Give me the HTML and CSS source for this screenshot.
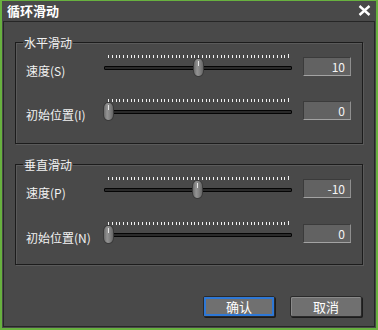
FILE: index.html
```html
<!DOCTYPE html>
<html lang="zh">
<head>
<meta charset="utf-8">
<title>循环滑动</title>
<link rel="stylesheet" href="styles.css">
</head>
<body>
<svg class="defs" width="0" height="0" aria-hidden="true">
  <symbol id="ticks" viewBox="0 0 181 4">
    <path d="M0.5 1v3m4-3v3m4-3v3m3-3v3m4-3v3m4-3v3m4-3v3m3-3v3m4-3v3m4-3v3m4-3v3m3-3v3m4-3v3m4-3v3m4-3v3m3-3v3m4-3v3m4-3v3m4-3v3m3-3v3m4-3v3m4-3v3m4-3v3m3-3v3m4-3v3m4-3v3m4-3v3m3-3v3m4-3v3m4-3v3m4-3v3m3-3v3m4-3v3m4-3v3m4-3v3m3-3v3m4-3v3m4-3v3m4-3v3m3-3v3m4-3v3m4-3v3m4-3v3m3-3v3m4-3v3m4-3v3m4-3v3m3-3v3m4-3v3M180.5 0v1" stroke="#f0f0f0" stroke-width="1" fill="none" shape-rendering="crispEdges"/>
  </symbol>
</svg>
<div class="window">
  <div class="titlebar">
    <span class="title">循环滑动</span>
    <svg class="close" width="13" height="11" viewBox="0 0 13 11"><path d="M1.5 1L11.5 10M11.5 1L1.5 10" stroke="#fff" stroke-width="2.4" fill="none"/></svg>
  </div>
  <div class="frame">
    <fieldset class="group">
      <legend>水平滑动</legend>
      <div class="row">
        <span class="label">速度(S)</span>
        <div class="slider">
          <svg class="ticks" width="181" height="4"><use href="#ticks"/></svg>
          <div class="track"></div>
          <div class="thumb" style="left:90px"></div>
        </div>
        <div class="field">10</div>
      </div>
      <div class="row">
        <span class="label">初始位置(I)</span>
        <div class="slider">
          <svg class="ticks" width="181" height="4"><use href="#ticks"/></svg>
          <div class="track"></div>
          <div class="thumb" style="left:0px"></div>
        </div>
        <div class="field">0</div>
      </div>
    </fieldset>
    <fieldset class="group group-second">
      <legend>垂直滑动</legend>
      <div class="row">
        <span class="label">速度(P)</span>
        <div class="slider">
          <svg class="ticks" width="181" height="4"><use href="#ticks"/></svg>
          <div class="track"></div>
          <div class="thumb" style="left:89px"></div>
        </div>
        <div class="field">-10</div>
      </div>
      <div class="row">
        <span class="label">初始位置(N)</span>
        <div class="slider">
          <svg class="ticks" width="181" height="4"><use href="#ticks"/></svg>
          <div class="track"></div>
          <div class="thumb" style="left:0px"></div>
        </div>
        <div class="field">0</div>
      </div>
    </fieldset>
    <div class="buttons">
      <button class="btn btn-default">确认</button>
      <button class="btn">取消</button>
    </div>
  </div>
</div>
</body>
</html>
```
FILE: styles.css
```css
html, body {
  margin: 0;
  padding: 0;
  background: #494949;
}
body {
  font-family: "Noto Sans CJK SC", "Noto Sans", "Liberation Sans", sans-serif;
  color: #f2f2f2;
  font-size: 12px;
}
.defs {
  position: absolute;
  width: 0;
  height: 0;
  overflow: hidden;
}
.window {
  width: 378px;
  height: 330px;
  box-sizing: border-box;
  border-style: solid;
  border-color: #68b13f;
  border-width: 1px 2px 2px 2px;
  background: #494949;
  padding: 0 1px 1px 1px;
}
.titlebar {
  height: 20px;
  display: flex;
  align-items: center;
  justify-content: space-between;
  padding: 0 4px 0 4px;
}
.title {
  font-weight: bold;
  font-size: 13px;
  line-height: 20px;
  color: #fff;
}
.close {
  display: block;
  margin-top: -1px;
}
.frame {
  height: 306px;
  box-sizing: border-box;
  border: 1px solid #262626;
}
.group {
  margin: 14px 11px 0 11px;
  padding: 5px 0 22px 10px;
  border: 1px solid #1c1c1c;
  box-shadow: 1px 1px 0 #5a5a5a, inset 1px 1px 0 #5a5a5a;
  min-width: 0;
}
.group legend {
  padding: 0 1px;
  margin-left: -3px;
  font-size: 12px;
  line-height: 13px;
  color: #f2f2f2;
}
.group-second {
  padding-bottom: 20px;
}
.group-second .row + .row {
  margin-top: 22px;
}
.row {
  display: grid;
  grid-template-columns: 66px 189px 48px;
  column-gap: 11px;
  align-items: start;
  height: 23px;
}
.row + .row {
  margin-top: 21px;
}
.label {
  padding-top: 10px;
  line-height: 14px;
  white-space: nowrap;
}
.slider {
  position: relative;
  height: 23px;
}
.ticks {
  display: block;
  margin-left: 5px;
}
.track {
  margin: 8px 0 0 1px;
  width: 188px;
  height: 4px;
  box-sizing: border-box;
  border: 1px solid #050505;
  background: #2a2a2a;
  border-radius: 1px;
}
.thumb {
  position: absolute;
  top: 4px;
  width: 11px;
  height: 19px;
  box-sizing: border-box;
  border: 1px solid #3a3a3a;
  border-radius: 5px / 6px;
  background: linear-gradient(to right, #6c6c6c, #939393 35%, #858585 60%, #666);
}
.thumb::after {
  content: "";
  position: absolute;
  left: 4px;
  top: 2px;
  width: 1px;
  height: 5px;
  background: #e6e6e6;
}
.field {
  margin-top: 3px;
  height: 19px;
  box-sizing: border-box;
  background: #626262;
  border-style: solid;
  border-width: 1px;
  border-color: #3b3b3b #8f8f8f #a3a3a3 #3b3b3b;
  text-align: right;
  padding-right: 5px;
  line-height: 17px;
  font-size: 12px;
  color: #f4f4f4;
}
.buttons {
  display: flex;
  justify-content: flex-end;
  gap: 15px;
  margin-top: 31px;
  padding-right: 12px;
}
.btn {
  width: 72px;
  height: 21px;
  box-sizing: border-box;
  padding: 0;
  margin: 0;
  background: #707070;
  border: 1px solid #2a2a2a;
  border-radius: 2px;
  box-shadow: inset 1px 1px 0 #8a8a8a, 1px 1px 0 #1c1c1c;
  font-family: "Noto Sans CJK SC", "Noto Sans", sans-serif;
  font-size: 13px;
  line-height: 19px;
  color: #fff;
}
.btn-default {
  outline: 2px solid #2e78d6;
  outline-offset: -3px;
}
```
